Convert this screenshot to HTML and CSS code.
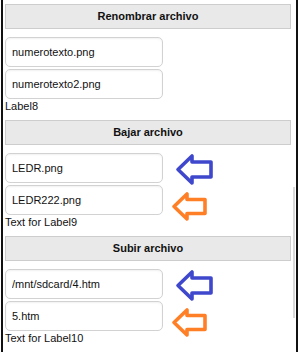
FILE: index.html
```html
<!DOCTYPE html>
<html>
<head>
<meta charset="utf-8">
<link rel="stylesheet" href="styles.css">
</head>
<body>
<div class="frame">
  <div class="content">
    <section class="group">
      <div class="bar">Renombrar archivo</div>
      <div class="row"><input class="field" type="text" value="numerotexto.png"></div>
      <div class="row row-last"><input class="field" type="text" value="numerotexto2.png"></div>
      <div class="label">Label8</div>
    </section>
    <section class="group">
      <div class="bar">Bajar archivo</div>
      <div class="row"><input class="field" type="text" value="LEDR.png">
        <svg class="arrow arrow-blue" width="37" height="31" viewBox="0 0 37 31"><polygon points="2,15.5 16,2 16,8 35,8 35,23 16,23 16,29" fill="none" stroke="#3f48cc" stroke-width="3.6" stroke-linejoin="round"/></svg>
      </div>
      <div class="row row-last"><input class="field" type="text" value="LEDR222.png">
        <svg class="arrow arrow-orange" width="35" height="29" viewBox="0 0 35 29"><polygon points="2,14.5 15,2 15,7.5 33,7.5 33,21.5 15,21.5 15,27" fill="none" stroke="#ff7f27" stroke-width="3.6" stroke-linejoin="round"/></svg>
      </div>
      <div class="label">Text for Label9</div>
    </section>
    <section class="group">
      <div class="bar">Subir archivo</div>
      <div class="row"><input class="field" type="text" value="/mnt/sdcard/4.htm">
        <svg class="arrow arrow-blue" width="37" height="31" viewBox="0 0 37 31"><polygon points="2,15.5 16,2 16,8 35,8 35,23 16,23 16,29" fill="none" stroke="#3f48cc" stroke-width="3.6" stroke-linejoin="round"/></svg>
      </div>
      <div class="row row-last"><input class="field" type="text" value="5.htm">
        <svg class="arrow arrow-orange" width="35" height="29" viewBox="0 0 35 29"><polygon points="2,14.5 15,2 15,7.5 33,7.5 33,21.5 15,21.5 15,27" fill="none" stroke="#ff7f27" stroke-width="3.6" stroke-linejoin="round"/></svg>
      </div>
      <div class="label">Text for Label10</div>
    </section>
  </div>
  <div class="thumb"></div>
</div>
</body>
</html>
```
FILE: styles.css
```css
html, body {
  margin: 0;
  padding: 0;
  background: #fff;
  overflow: hidden;
}
body {
  font-family: "Liberation Sans", Arial, sans-serif;
  font-size: 11px;
  color: #111;
  width: 300px;
  height: 352px;
}
.frame {
  position: relative;
  margin-left: 1px;
  width: 293px;
  height: 352px;
  border-left: 2px solid #111;
  border-right: 2px solid #111;
  overflow: hidden;
}
.content {
  padding: 4px 0 0 2px;
  width: 286px;
}
.group {
  display: flex;
  flex-direction: column;
  margin-bottom: 6px;
}
.bar {
  height: 23px;
  line-height: 23px;
  border: 1px solid #cdcdcd;
  background: #e9e9e9;
  text-align: center;
  font-weight: bold;
  color: #111;
  margin-bottom: 8px;
}
.row {
  display: flex;
  align-items: flex-start;
  height: 30px;
  margin-bottom: 2px;
}
.row-last {
  margin-bottom: 0;
}
.field {
  box-sizing: border-box;
  width: 158px;
  height: 30px;
  margin: 0;
  padding: 0 6px;
  border: 1px solid #d2d2d2;
  border-radius: 5px;
  background: #fff;
  box-shadow: inset 0 1px 2px rgba(0,0,0,0.06);
  font-family: "Liberation Sans", Arial, sans-serif;
  font-size: 11px;
  color: #111;
  outline: none;
}
.arrow {
  flex: none;
  overflow: visible;
}
.arrow-blue {
  margin-left: 13px;
  margin-top: 1px;
}
.arrow-orange {
  margin-left: 9px;
  margin-top: 7px;
}
.label {
  line-height: 15px;
  height: 15px;
  color: #111;
}
.thumb {
  position: absolute;
  left: 290px;
  top: 187px;
  width: 2px;
  height: 131px;
  background: #d9d9d9;
}
```
